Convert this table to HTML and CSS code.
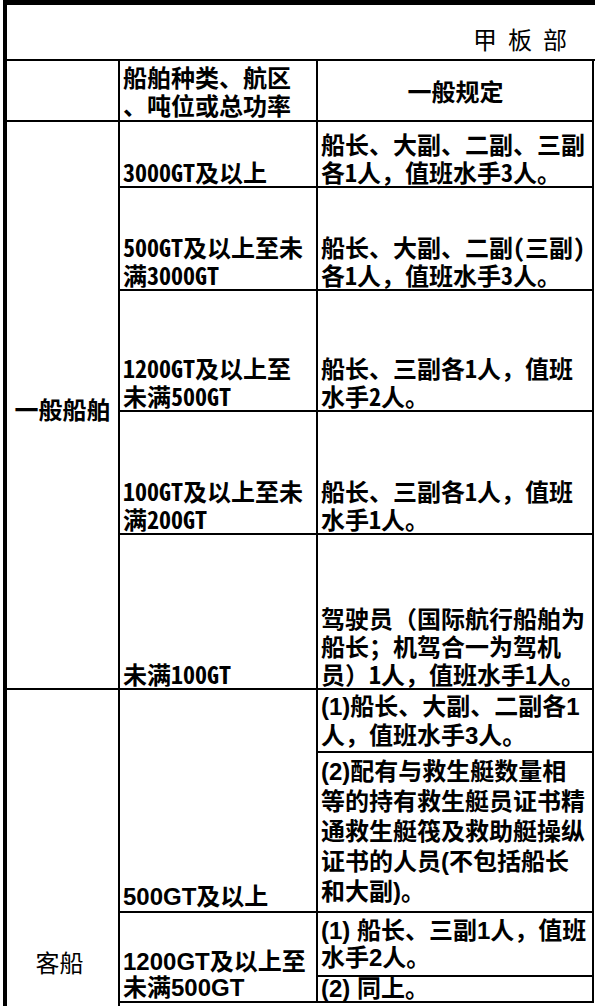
FILE: index.html
```html
<!DOCTYPE html>
<html lang="zh-CN">
<head>
<meta charset="utf-8">
<title>甲板部</title>
<link rel="stylesheet" href="styles.css">
</head>
<body>
<div class="page">
  <div class="sheet">
    <div class="title">甲板部</div>
    <div class="grid">
      <div class="cell"></div>
      <div class="cell hdr-left">船舶种类、航区<br>、吨位或总功率</div>
      <div class="cell hdr-center">一般规定</div>

      <div class="cell span5 group">一般船舶</div>
      <div class="cell"><span><span class="hw">3000GT</span>及以上</span></div>
      <div class="cell"><span>船长、大副、二副、三副</span><span>各<span class="hw">1</span>人，值班水手<span class="hw">3</span>人。</span></div>
      <div class="cell"><span><span class="hw">500GT</span>及以上至未</span><span>满<span class="hw">3000GT</span></span></div>
      <div class="cell"><span>船长、大副、二副<span class="hw">(</span>三副<span class="hw">)</span></span><span>各<span class="hw">1</span>人，值班水手<span class="hw">3</span>人。</span></div>
      <div class="cell"><span><span class="hw">1200GT</span>及以上至</span><span>未满<span class="hw">500GT</span></span></div>
      <div class="cell"><span>船长、三副各<span class="hw">1</span>人，值班</span><span>水手<span class="hw">2</span>人。</span></div>
      <div class="cell"><span><span class="hw">100GT</span>及以上至未</span><span>满<span class="hw">200GT</span></span></div>
      <div class="cell"><span>船长、三副各<span class="hw">1</span>人，值班</span><span>水手<span class="hw">1</span>人。</span></div>
      <div class="cell"><span>未满<span class="hw">100GT</span></span></div>
      <div class="cell"><span>驾驶员（国际航行船舶为</span><span>船长；机驾合一为驾机</span><span>员）<span class="hw">1</span>人，值班水手<span class="hw">1</span>人。</span></div>

      <div class="cell span5 group-b">客船</div>
      <div class="cell span2 alt">500GT及以上</div>
      <div class="cell alt mid lh29"><span>(1)船长、大副、二副各1</span><span>人，值班水手3人。</span></div>
      <div class="cell alt mid lh30"><span>(2)配有与救生艇数量相</span><span>等的持有救生艇员证书精</span><span>通救生艇筏及救助艇操纵</span><span>证书的人员(不包括船长</span><span>和大副)。</span></div>
      <div class="cell span2 alt lh26"><span>1200GT及以上至</span><span>未满500GT</span></div>
      <div class="cell alt mid lh27"><span>(1) 船长、三副1人，值班</span><span>水手2人。</span></div>
      <div class="cell alt mid lh24">(2) 同上。</div>
    </div>
  </div>
</div>
</body>
</html>
```

FILE: styles.css
```css
html, body {
  margin: 0;
  padding: 0;
  background: #fff;
}

.page {
  width: 595px;
  height: 1006px;
  overflow: hidden;
  background: #fff;
}

.sheet {
  margin-left: 3px;
  width: 592px;
  color: #000;
  font-family: "Noto Sans CJK SC", sans-serif;
  font-weight: 700;
  font-size: 24px;
  line-height: 28px;
}

.hw {
  font-feature-settings: "hwid" 1;
}

.title {
  box-sizing: border-box;
  height: 61px;
  border-top: 5px solid #000;
  border-left: 4px solid #000;
  border-bottom: 2px solid #000;
  display: flex;
  justify-content: flex-end;
  align-items: flex-end;
  padding: 0 17px 6px 0;
  font-weight: 400;
  letter-spacing: 11px;
}

.grid {
  display: grid;
  box-sizing: border-box;
  width: 591px;
  border-left: 4px solid #000;
  grid-template-columns: 113px 198px 276px;
  grid-template-rows: 61px 66px 103px 121px 123px 155px 63px 160px 64px 26px 231px;
}

.cell {
  box-sizing: border-box;
  border-right: 2px solid #000;
  border-bottom: 2px solid #000;
  background: #fff;
  display: flex;
  flex-direction: column;
  justify-content: flex-end;
  padding: 0 2px 0 3px;
  white-space: nowrap;
}

.span5 { grid-row: span 5; }
.span2 { grid-row: span 2; }

.hdr-left {
  justify-content: center;
}

.hdr-center {
  justify-content: center;
  align-items: center;
}

.group {
  justify-content: center;
  align-items: center;
  padding: 8px 0 0;
}

.group-b {
  border-bottom: none;
  justify-content: center;
  align-items: center;
  padding: 0 6px 0 0;
  font-weight: 400;
}

.alt {
  font-family: "Liberation Sans", "Noto Sans CJK SC", sans-serif;
  font-weight: 700;
}

.mid { justify-content: center; }

.lh24 { line-height: 24px; }
.lh26 { line-height: 26px; }
.lh27 { line-height: 27px; }
.lh29 { line-height: 29px; }
.lh30 { line-height: 30px; }
```
